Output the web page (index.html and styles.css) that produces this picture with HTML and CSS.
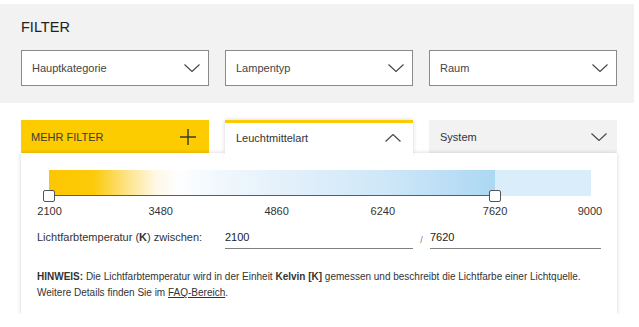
FILE: index.html
```html
<!DOCTYPE html>
<html lang="de">
<head>
<meta charset="utf-8">
<title>Filter</title>
<link rel="stylesheet" href="styles.css">
</head>
<body>
<section class="filter-top">
  <h2 class="title">FILTER</h2>
  <div class="grid3">
    <div class="select"><span>Hauptkategorie</span><svg class="chev" viewBox="0 0 16 8" width="16" height="8"><polyline points="0.5,0.5 8,7.5 15.5,0.5"/></svg></div>
    <div class="select"><span>Lampentyp</span><svg class="chev" viewBox="0 0 16 8" width="16" height="8"><polyline points="0.5,0.5 8,7.5 15.5,0.5"/></svg></div>
    <div class="select"><span>Raum</span><svg class="chev" viewBox="0 0 16 8" width="16" height="8"><polyline points="0.5,0.5 8,7.5 15.5,0.5"/></svg></div>
  </div>
</section>

<section class="more">
  <div class="grid3 tabs">
    <div class="tab tab-yellow"><span>MEHR FILTER</span><svg class="plus" viewBox="0 0 16 16" width="16" height="16"><line x1="8" y1="0" x2="8" y2="16"/><line x1="0" y1="8" x2="16" y2="8"/></svg></div>
    <div class="tab tab-active"><span>Leuchtmittelart</span><svg class="chev" viewBox="0 0 16 8" width="16" height="8"><polyline points="0.5,7.5 8,0.5 15.5,7.5"/></svg></div>
    <div class="tab tab-gray"><span>System</span><svg class="chev" viewBox="0 0 16 8" width="16" height="8"><polyline points="0.5,0.5 8,7.5 15.5,0.5"/></svg></div>
  </div>
  <div class="panel">
    <div class="slider">
      <div class="bar">
        <div class="fill" style="width:82.2%"></div>
        <div class="rest"></div>
      </div>
      <span class="handle" style="left:0%"></span>
      <span class="handle" style="left:82.2%"></span>
      <div class="ticks">
        <span class="tick" style="left:0.1%">2100</span>
        <span class="tick" style="left:20.6%">3480</span>
        <span class="tick" style="left:42%">4860</span>
        <span class="tick" style="left:61.6%">6240</span>
        <span class="tick" style="left:82.3%">7620</span>
        <span class="tick" style="left:99.8%">9000</span>
      </div>
    </div>
    <div class="range-row">
      <span class="range-label">Lichtfarbtemperatur (<b>K</b>) zwischen:</span>
      <span class="field field-from">2100</span>
      <span class="slash">/</span>
      <span class="field field-to">7620</span>
    </div>
    <p class="note"><b>HINWEIS:</b> Die Lichtfarbtemperatur wird in der Einheit <b>Kelvin [K]</b> gemessen und beschreibt die Lichtfarbe einer Lichtquelle.<br>Weitere Details finden Sie im <a href="#" class="link">FAQ-Bereich</a>.</p>
  </div>
</section>
</body>
</html>
```

FILE: styles.css
```css
* { box-sizing: border-box; }

body {
  margin: 0;
  background: #ffffff;
  font-family: "Liberation Sans", Arial, sans-serif;
  color: #333333;
}

.filter-top {
  margin-top: 4px;
  width: 634px;
  background: #f2f2f2;
  padding: 15px 0 17px 21px;
}

.title {
  margin: 0;
  font-size: 14.5px;
  line-height: 16px;
  font-weight: normal;
  color: #222222;
}

.grid3 {
  display: grid;
  grid-template-columns: 188px 188px 188px;
  column-gap: 16px;
}

.filter-top .grid3 { margin-top: 15px; }

.select {
  height: 36px;
  border: 1px solid #8a8a8a;
  background: #ffffff;
  display: flex;
  align-items: center;
  justify-content: space-between;
  padding: 0 8px 0 10px;
  font-size: 11px;
  color: #444444;
}

.chev polyline {
  fill: none;
  stroke: #4a4a4a;
  stroke-width: 1.2;
}

.plus line {
  stroke: #333333;
  stroke-width: 1.4;
}

.more {
  margin: 17px 0 0 21px;
  width: 596px;
}

.tabs { height: 33px; }

.tab {
  display: flex;
  align-items: center;
  justify-content: space-between;
  font-size: 11px;
  color: #333333;
  height: 33px;
}

.tab-yellow {
  background: #fccb00;
  padding: 0 13px 0 10px;
  color: #3a3a3a;
}

.tab-active {
  position: relative;
  z-index: 2;
  background: #ffffff;
  border-top: 3px solid #fccb00;
  padding: 0 12px 0 11px;
  box-shadow: 0 0 4px rgba(0, 0, 0, 0.18);
}

.tab-active::after {
  content: "";
  position: absolute;
  left: 0;
  right: 0;
  bottom: -6px;
  height: 8px;
  background: #ffffff;
}

.tab-gray {
  background: #f2f2f2;
  padding: 0 10px 0 11px;
}

.panel {
  position: relative;
  z-index: 1;
  background: #ffffff;
  box-shadow: 0 0 4px rgba(0, 0, 0, 0.18);
  padding: 17px 16px 13px;
  height: 161px;
}

.slider {
  position: relative;
  margin: 0 10px 0 12px;
}

.bar {
  display: flex;
  height: 26px;
}

.fill {
  height: 26px;
  border-bottom: 1px solid #5c5c5c;
  background: linear-gradient(to right,
    #fcc700 0%,
    #fcca0a 10%,
    #fde590 18%,
    #fff8e6 24%,
    #fdfeff 29%,
    #f1f8fd 38%,
    #e4f1fb 52%,
    #cfe7f8 75%,
    #acd8f3 100%);
}

.rest {
  flex: 1;
  height: 26px;
  background: #d9edfa;
}

.handle {
  position: absolute;
  top: 20px;
  width: 12px;
  height: 12px;
  margin-left: -6px;
  background: #ffffff;
  border: 1px solid #555555;
  border-radius: 2px;
}

.ticks {
  position: relative;
  height: 14px;
  margin-top: 8px;
}

.tick {
  position: absolute;
  top: 0;
  transform: translateX(-50%);
  font-size: 11px;
  line-height: 14px;
  color: #333333;
}

.range-row {
  display: flex;
  margin-top: 13px;
  font-size: 11px;
  line-height: 13px;
}

.range-label {
  width: 188px;
  color: #333333;
}

.field {
  padding-bottom: 4px;
  border-bottom: 1px solid #808080;
  color: #222222;
}

.field-from { width: 188px; }

.slash {
  width: 17px;
  text-align: center;
  color: #777777;
  font-size: 9px;
  padding-top: 3px;
}

.field-to { width: 171px; }

.note {
  margin: 20px 0 0;
  font-size: 10px;
  line-height: 16px;
  color: #333333;
}

.link {
  color: #333333;
  text-decoration: underline;
}
```
